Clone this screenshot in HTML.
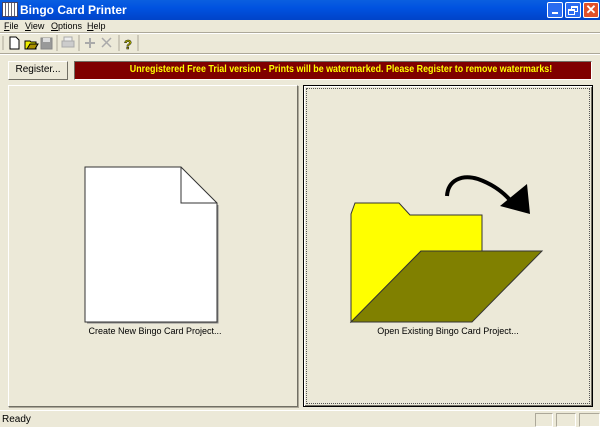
<!DOCTYPE html>
<html><head><meta charset="utf-8"><style>
*{margin:0;padding:0;box-sizing:border-box}
body{width:600px;height:427px;background:#ece9d8;font-family:"Liberation Sans",sans-serif;font-size:11px;position:relative;overflow:hidden;color:#000}
.a{position:absolute;white-space:nowrap}
</style></head><body>
<div class="a" style="left:0;top:0;width:600px;height:20px;background:linear-gradient(#0a5fe0,#0052e0 40%,#0043c8);"></div>
<div class="a" style="left:3px;top:3px;width:14px;height:13px;background:repeating-linear-gradient(90deg,#fff 0 2px,#667 2px 3px),#fff;outline:1px solid #446"></div>
<div class="a" style="left:20px;top:3px;color:#fff;font-weight:bold;font-size:12px">Bingo Card Printer</div>
<div class="a" style="left:547px;top:2px;width:16px;height:16px;background:#2a6cf0;border:1px solid #fff;border-radius:2px"><div class="a" style="left:4px;top:9px;width:6px;height:2px;background:#fff"></div></div>
<div class="a" style="left:565px;top:2px;width:16px;height:16px;background:#2a6cf0;border:1px solid #fff;border-radius:2px"><div class="a" style="left:5px;top:3px;width:7px;height:6px;border:1px solid #fff;border-top-width:2px"></div><div class="a" style="left:2px;top:6px;width:7px;height:6px;border:1px solid #fff;border-top-width:2px;background:#2a6cf0"></div></div>
<div class="a" style="left:583px;top:2px;width:16px;height:16px;background:#e0502a;border:1px solid #fff;border-radius:2px;color:#fff;font-weight:bold;font-size:13px;line-height:13px;text-align:center">✕</div>
<div class="a" style="left:4px;top:21px;font-size:9px"><u>F</u>ile</div>
<div class="a" style="left:25px;top:21px;font-size:9px"><u>V</u>iew</div>
<div class="a" style="left:51px;top:21px;font-size:9px"><u>O</u>ptions</div>
<div class="a" style="left:87px;top:21px;font-size:9px"><u>H</u>elp</div>
<div class="a" style="left:0;top:33px;width:600px;height:1px;background:#fff"></div>
<div class="a" style="left:0;top:32px;width:600px;height:1px;background:#aca899"></div>
<svg class="a" style="left:0;top:33px" width="600" height="20">
<line x1="3" y1="3" x2="3" y2="17" stroke="#aca899"/>
<path d="M10 4h6l3 3v9h-9z" fill="#fff" stroke="#000"/>
<path d="M25 8h5l1 1h5v7h-11z" fill="#ee0" stroke="#000"/><path d="M27 16l3-5h8l-3 5z" fill="#aa9000" stroke="#000"/>
<rect x="41" y="5" width="11" height="11" fill="#999" stroke="#888"/><rect x="43" y="5" width="7" height="4" fill="#ddd"/>
<line x1="57" y1="2" x2="57" y2="18" stroke="#aca899"/>
<rect x="62" y="8" width="12" height="6" fill="#ccc" stroke="#aaa"/><rect x="64" y="4" width="8" height="4" fill="#eee" stroke="#aaa"/>
<line x1="79" y1="2" x2="79" y2="18" stroke="#aca899"/>
<path d="M90 5v10M85 10h10" stroke="#aaa" stroke-width="2"/>
<path d="M102 5l9 9M111 5l-9 9" stroke="#aaa" stroke-width="1.5"/>
<line x1="119" y1="2" x2="119" y2="18" stroke="#aca899"/>
<text x="124" y="16" font-size="13" font-weight="bold" fill="#bb0" stroke="#000" stroke-width=".5" font-family="Liberation Sans">?</text>
<line x1="138" y1="2" x2="138" y2="18" stroke="#aca899"/>
</svg>
<div class="a" style="left:0;top:53px;width:600px;height:1px;background:#aca899"></div>
<div class="a" style="left:0;top:54px;width:600px;height:1px;background:#fff"></div>
<div class="a" style="left:8px;top:61px;width:60px;height:19px;border:1px solid;border-color:#fff #716f64 #716f64 #fff;text-align:center;line-height:16px;font-size:10px">Register...</div>
<div class="a" style="left:74px;top:61px;width:518px;height:19px;background:#800000;border:1px solid;border-color:#716f64 #fff #fff #716f64;"></div>
<div class="a" style="left:82px;top:61px;width:518px;height:19px;color:#ff0;font-weight:bold;text-align:center;line-height:18px;font-size:10px;transform:scaleX(.89)">Unregistered Free Trial version - Prints will be watermarked. Please Register to remove watermarks!</div>
<div class="a" style="left:8px;top:85px;width:290px;height:322px;border:1px solid;border-color:#fff #716f64 #716f64 #fff;box-shadow:1px 1px 0 #aca899"></div>
<div class="a" style="left:303px;top:85px;width:290px;height:322px;border:1px solid #000;box-shadow:inset 1px 1px 0 #fff,inset -1px -1px 0 #716f64"><div class="a" style="left:2px;top:2px;right:2px;bottom:2px;border:1px dotted #555"></div></div>
<svg class="a" style="left:0;top:0" width="600" height="427">
<path d="M85 167H181L217 203V322H85Z" fill="#fff" stroke="#333"/>
<path d="M181 167V203H217" fill="none" stroke="#333"/>
<path d="M87 323H218V205" fill="none" stroke="#888"/>
<path d="M351 322V214L355 203H399L410 215H482V251H421Z" fill="#ff0" stroke="#333"/>
<path d="M351 322L421 251H542L472 322Z" fill="#808000" stroke="#333"/>
<path d="M447 196C448 180 462 174 478 179C492 184 502 191 510 200" fill="none" stroke="#000" stroke-width="4"/>
<path d="M500 206L527 184L530 214Z" fill="#000"/>
</svg>
<div class="a" style="left:10px;top:326px;width:290px;text-align:center;font-size:9px">Create New Bingo Card Project...</div>
<div class="a" style="left:303px;top:326px;width:290px;text-align:center;font-size:9px">Open Existing Bingo Card Project...</div>
<div class="a" style="left:0;top:410px;width:600px;height:1px;background:#fff"></div>
<div class="a" style="left:2px;top:414px;font-size:10px">Ready</div>
<div class="a" style="left:535px;top:413px;width:18px;height:14px;border:1px solid;border-color:#aca899 #fff #fff #aca899"></div>
<div class="a" style="left:556px;top:413px;width:20px;height:14px;border:1px solid;border-color:#aca899 #fff #fff #aca899"></div>
<div class="a" style="left:579px;top:413px;width:21px;height:14px;border:1px solid;border-color:#aca899 #fff #fff #aca899"></div>
</body></html>
